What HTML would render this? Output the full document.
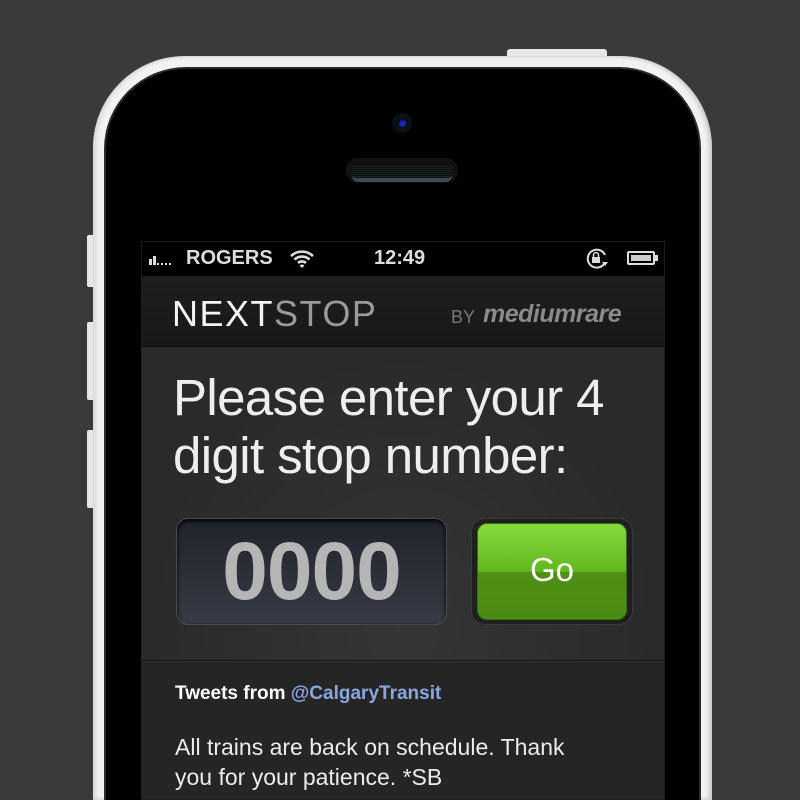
<!DOCTYPE html>
<html><head><style>
*{margin:0;padding:0;box-sizing:border-box}
html{width:800px;height:800px;overflow:hidden}
body{width:800px;height:800px;background:#3a3a3a;position:relative;overflow:hidden;font-family:"Liberation Sans",sans-serif}
.btn{position:absolute;background:#e6e6e6;border-radius:2px}
.phone{position:absolute;left:93px;top:56px;width:619px;height:744px;background:#f2f2f2;border-radius:92px 92px 0 0;box-shadow:inset -3px 0 4px #c8c8c8,inset 3px 0 4px #d8d8d8}
.bezel{position:absolute;left:13px;top:13px;width:593px;height:731px;background:#000;border-radius:80px 80px 0 0;box-shadow:0 0 0 2px #2a2a2a}
.cam{position:absolute;left:392px;top:113px;width:20px;height:20px;border-radius:50%;background:#0b0f16}
.cam:after{content:"";position:absolute;left:6px;top:6px;width:8px;height:8px;border-radius:50%;background:#1a2ac0;box-shadow:inset 1px 1px 2px #000}
.spk{position:absolute;left:346px;top:158px;width:112px;height:25px;border-radius:12px;background:#111;overflow:hidden}
.spk:after{content:"";position:absolute;left:6px;top:8px;width:100px;height:12px;background:repeating-linear-gradient(#1c2426 0 1px,#0a0d0e 1px 2px);border-radius:0 0 6px 6px;border-bottom:4px solid #3e4b4d}
.screen{position:absolute;left:141px;top:241px;width:524px;height:559px;background:#000;border:1px solid #1a1f20;overflow:hidden}
.status{height:34px;color:#ddd;font-weight:bold;font-size:20px;position:relative}
.header{position:absolute;top:34px;left:0;width:522px;height:71px;background:linear-gradient(#1e1e1e,#181818);border-bottom:1px solid #0c0c0c}
.main{position:absolute;top:105px;left:0;width:522px;height:314px;background:radial-gradient(ellipse at 50% 90%,#353535,#2a2a2a 70%);border-bottom:1px solid #151515}
.tw{position:absolute;top:419px;left:0;width:522px;height:200px;background:#252525;border-top:1px solid #333}
</style></head><body>
<div class="btn" style="left:507px;top:49px;width:100px;height:9px;border-radius:3px 3px 0 0"></div>
<div class="btn" style="left:87px;top:235px;width:8px;height:52px"></div>
<div class="btn" style="left:87px;top:322px;width:8px;height:78px"></div>
<div class="btn" style="left:87px;top:430px;width:8px;height:78px"></div>
<div class="phone"><div class="bezel"></div></div>
<div class="cam"></div>
<div class="spk"></div>
<div class="screen">
 <div class="status">
  <div style="position:absolute;left:7px;top:17px;width:3px;height:6px;background:#ddd"></div>
  <div style="position:absolute;left:11px;top:14px;width:3px;height:9px;background:#ddd"></div>
  <div style="position:absolute;left:15px;top:21px;width:14px;height:2px;border-top:2px dotted #ddd"></div>
  <span style="position:absolute;left:44px;top:5px">ROGERS</span>
  <svg style="position:absolute;left:147px;top:7px" width="26" height="20" viewBox="0 0 26 20"><path d="M2 7a16 16 0 0 1 22 0M5.5 10.5a11 11 0 0 1 15 0M9 14a6 6 0 0 1 8 0" stroke="#ddd" stroke-width="2.6" fill="none"/><path d="M10.5 16.5L13 19l2.5-2.5a3.5 3.5 0 0 0-5 0z" fill="#ddd"/></svg>
  <span style="position:absolute;left:232px;top:5px">12:49</span>
  <svg style="position:absolute;left:443px;top:6px" width="26" height="22" viewBox="0 0 26 22"><path d="M19 16A9 9 0 1 1 20 7" stroke="#ddd" stroke-width="2" fill="none"/><path d="M17 14h6l-3 4z" fill="#ddd"/><rect x="7" y="9" width="8" height="6" fill="#ddd"/><path d="M8.5 9V7a2.5 2.5 0 0 1 5 0v2" stroke="#ddd" stroke-width="1.5" fill="none"/></svg>
  <div style="position:absolute;left:485px;top:9px;width:28px;height:14px;border:2px solid #ddd;border-radius:2px"><div style="margin:2px;height:6px;background:#ccc"></div></div>
  <div style="position:absolute;left:513px;top:13px;width:3px;height:6px;background:#ddd"></div>
 </div>
 <div class="header">
  <span style="position:absolute;left:30px;top:17px;font-size:36px;color:#f4f4f4;letter-spacing:1.5px">NEXT<span style="color:#9a9a9a">STOP</span></span>
  <span style="position:absolute;left:309px;top:31px;font-size:18px;color:#777">BY</span>
  <span style="position:absolute;left:341px;top:24px;font-size:25px;font-weight:bold;font-style:italic;color:#8a8a8a;letter-spacing:-0.5px">mediumrare</span>
 </div>
 <div class="main">
  <div style="position:absolute;left:31px;top:22px;font-size:51px;line-height:58px;color:#eee;letter-spacing:-0.6px">Please enter your 4<br>digit stop number:</div>
  <div style="position:absolute;left:34px;top:171px;width:271px;height:107px;border-radius:12px;background:linear-gradient(#20232a,#373b45);border:1px solid #474a50;box-shadow:inset 0 2px 4px #000"></div>
  <div style="position:absolute;left:34px;top:178px;width:271px;text-align:center;font-size:82px;font-weight:bold;color:#b5b5b5;letter-spacing:-1px">0000</div>
  <div style="position:absolute;left:329px;top:171px;width:162px;height:107px;border-radius:14px;background:#1f1f1f;border:1px solid #3a3a3a"></div>
  <div style="position:absolute;left:335px;top:176px;width:150px;height:97px;border-radius:10px;background:linear-gradient(#86d93c,#63b71f 50%,#4f8f14 51%,#4a8c12);border:1px solid #3b6b10"></div>
  <div style="position:absolute;left:335px;top:204px;width:150px;text-align:center;font-size:33px;color:#fff">Go</div>
 </div>
 <div class="tw">
  <div style="position:absolute;left:33px;top:21px;font-size:19px;font-weight:bold;color:#fff">Tweets from <span style="color:#8aa6e0">@CalgaryTransit</span></div>
  <div style="position:absolute;left:33px;top:70px;font-size:23px;line-height:30px;color:#ececec">All trains are back on schedule. Thank<br>you for your patience. *SB</div>
 </div>
</div>
</body></html>
